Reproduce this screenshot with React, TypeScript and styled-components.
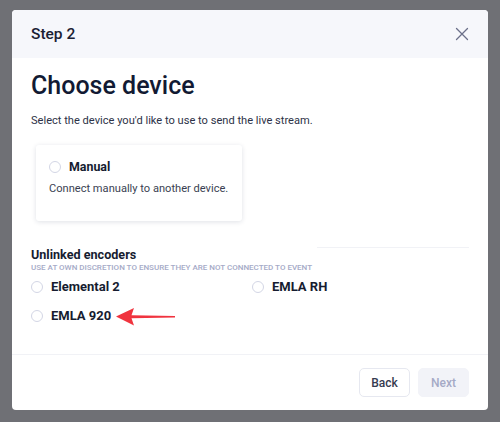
import { useState } from "react";
import styled, { createGlobalStyle } from "styled-components";

const GlobalStyle = createGlobalStyle`
  html, body {
    margin: 0;
    padding: 0;
    background: #6f7075;
    font-family: Roboto, "Noto Sans", sans-serif;
    -webkit-font-smoothing: antialiased;
  }
`;

const Backdrop = styled.div`
  width: 500px;
  height: 422px;
  padding: 10px 12px 12px;
  box-sizing: border-box;
`;

const Modal = styled.div`
  background: #fff;
  border-radius: 4px;
  height: 400px;
  display: flex;
  flex-direction: column;
  overflow: hidden;
`;

const Header = styled.div`
  height: 48px;
  background: #f6f7fb;
  display: flex;
  align-items: center;
  justify-content: space-between;
  padding: 0 19px;
`;

const StepTitle = styled.h3`
  margin: 0;
  font-size: 15.5px;
  font-weight: 500;
  color: #1b2133;
`;

const CloseButton = styled.button`
  border: 0;
  background: none;
  padding: 0;
  width: 16px;
  height: 16px;
  display: flex;
  cursor: pointer;
  margin-right: -1px;
`;

const Body = styled.div`
  flex: 1;
  padding: 12px 19px 0;
`;

const Heading = styled.h1`
  margin: 0;
  font-size: 25px;
  line-height: 32px;
  font-weight: 500;
  color: #121a33;
`;

const Subtitle = styled.p`
  margin: 12px 0 0;
  font-size: 11.1px;
  color: #2d3247;
`;

const Card = styled.label`
  display: block;
  width: 206px;
  height: 76px;
  box-sizing: border-box;
  margin: 18px 0 0 5px;
  padding: 14px 13px;
  border-radius: 3px;
  background: #fff;
  box-shadow: 0 1px 5px rgba(30, 40, 80, 0.14);
  cursor: pointer;
`;

const OptionRow = styled.label`
  display: flex;
  align-items: center;
  gap: 8px;
  cursor: pointer;
`;

const Radio = styled.span<{ $checked?: boolean }>`
  width: 12px;
  height: 12px;
  border-radius: 50%;
  border: 1.5px solid #d3d6e5;
  box-sizing: border-box;
  flex-shrink: 0;
  background: ${(p) => (p.$checked ? "#3b5bdb" : "#fff")};
`;

const OptionName = styled.span<{ $small?: boolean }>`
  font-size: ${(p) => (p.$small ? "12.4px" : "13px")};
  font-weight: 700;
  color: #161c30;
`;

const CardText = styled.div`
  margin-top: 8px;
  font-size: 11.1px;
  color: #3a3f52;
`;

const Section = styled.div`
  margin-top: 26px;
`;

const SectionHead = styled.div`
  display: flex;
  align-items: flex-start;
`;

const SectionTitle = styled.h4`
  margin: 0;
  font-size: 12.6px;
  line-height: 16px;
  font-weight: 700;
  color: #161c30;
`;

const Rule = styled.div`
  margin: 0 0 0 auto;
  width: 152px;
  height: 1px;
  background: #f1f2f6;
`;

const Caption = styled.div`
  font-size: 8px;
  font-weight: 500;
  text-transform: uppercase;
  color: #a5aac7;
`;

const Grid = styled.div`
  display: grid;
  grid-template-columns: 221px 1fr;
  row-gap: 10px;
  margin-top: 7px;
`;

const Pointer = styled.span`
  display: flex;
  margin-left: -3px;
  margin-top: 3px;
`;

const Footer = styled.div`
  border-top: 1px solid #f1f2f6;
  display: flex;
  justify-content: flex-end;
  gap: 8px;
  padding: 13px 19px 13px;
`;

const Button = styled.button<{ $disabled?: boolean }>`
  width: 51px;
  height: 29px;
  border-radius: 5px;
  font-family: inherit;
  font-size: 12px;
  font-weight: 500;
  cursor: ${(p) => (p.$disabled ? "default" : "pointer")};
  border: 1px solid ${(p) => (p.$disabled ? "#f2f3f8" : "#e6e8f0")};
  background: ${(p) => (p.$disabled ? "#f2f3f8" : "#fff")};
  color: ${(p) => (p.$disabled ? "#a5aac6" : "#363b50")};
`;

const encoders = ["Elemental 2", "EMLA RH", "EMLA 920"];

export default function App() {
  const [selected, setSelected] = useState<string | null>(null);

  return (
    <>
      <GlobalStyle />
      <Backdrop>
        <Modal>
          <Header>
            <StepTitle>Step 2</StepTitle>
            <CloseButton aria-label="Close">
              <svg width="16" height="16" viewBox="0 0 16 16">
                <path
                  d="M2.5 2.5l11 11M13.5 2.5l-11 11"
                  stroke="#6b7089"
                  strokeWidth="1.3"
                  strokeLinecap="round"
                />
              </svg>
            </CloseButton>
          </Header>
          <Body>
            <Heading>Choose device</Heading>
            <Subtitle>Select the device you'd like to use to send the live stream.</Subtitle>
            <Card onClick={() => setSelected("Manual")}>
              <OptionRow as="div">
                <Radio $checked={selected === "Manual"} />
                <OptionName $small>Manual</OptionName>
              </OptionRow>
              <CardText>Connect manually to another device.</CardText>
            </Card>
            <Section>
              <SectionHead>
                <SectionTitle>Unlinked encoders</SectionTitle>
                <Rule />
              </SectionHead>
              <Caption>Use at own discretion to ensure they are not connected to event</Caption>
              <Grid>
                {encoders.map((name) => (
                  <OptionRow key={name} onClick={() => setSelected(name)}>
                    <Radio $checked={selected === name} />
                    <OptionName>{name}</OptionName>
                    {name === "EMLA 920" && (
                      <Pointer>
                        <svg width="60" height="20" viewBox="0 0 60 20">
                          <path
                            d="M0 9.5 L18 1 L15.5 8.3 L59 9 L59 10.6 L15.5 11.2 L18 18.5 Z"
                            fill="#f0343f"
                          />
                        </svg>
                      </Pointer>
                    )}
                  </OptionRow>
                ))}
              </Grid>
            </Section>
          </Body>
          <Footer>
            <Button>Back</Button>
            <Button $disabled>Next</Button>
          </Footer>
        </Modal>
      </Backdrop>
    </>
  );
}
